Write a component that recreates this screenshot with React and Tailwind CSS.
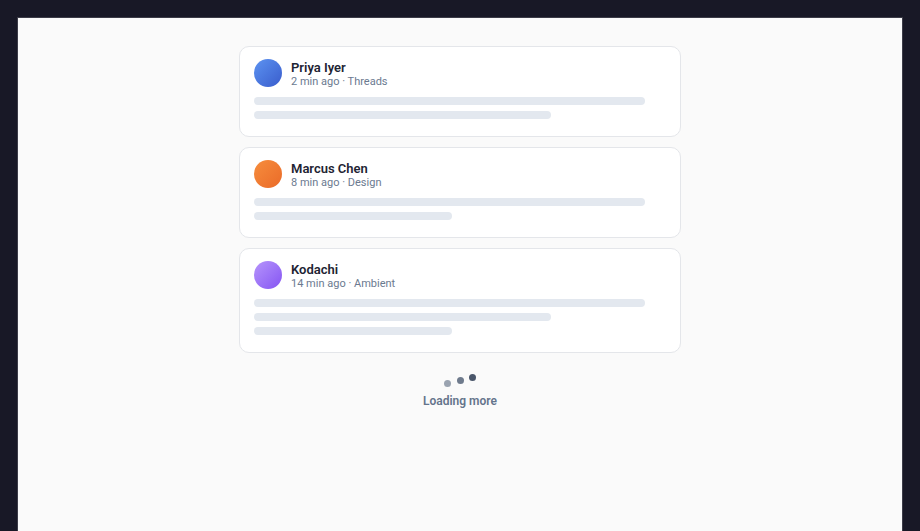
import React from 'react';

const POSTS = [
  { name: 'Priya Iyer', meta: '2 min ago · Threads', avatar: 'bg-gradient-to-br from-[#5d93f1] to-[#3a5ccc]', bars: ['w-[95%]', 'w-[72%]'] },
  { name: 'Marcus Chen', meta: '8 min ago · Design', avatar: 'bg-gradient-to-br from-[#f68d3d] to-[#ea6a28]', bars: ['w-[95%]', 'w-[48%]'] },
  { name: 'Kodachi', meta: '14 min ago · Ambient', avatar: 'bg-gradient-to-br from-[#b794fb] to-[#8652f2]', bars: ['w-[95%]', 'w-[72%]', 'w-[48%]'] },
];

const PostSkeleton = ({ post }) => (
  <div className="bg-white border border-[#e4e6ea] rounded-[10px] pt-[12px] pb-[17px] pl-[14px] pr-[14px]">
    {/* Header */}
    <div className="flex items-center gap-[9px] h-[28px]">
      <div className={`w-[28px] h-[28px] rounded-full shrink-0 ${post.avatar}`} />
      <div className="flex flex-col translate-y-[1px]">
        <div className="text-[13px] leading-[15px] font-semibold text-[#1e2433]">{post.name}</div>
        <div className="text-[11px] leading-[13px] text-[#6b7a90]">{post.meta}</div>
      </div>
    </div>

    {/* Placeholder lines */}
    <div className="mt-[10px] flex flex-col gap-[6px]">
      {post.bars.map((w, i) => (
        <div key={i} className={`h-[8px] rounded-[4px] bg-[#e3e8ef] ${w}`} />
      ))}
    </div>
  </div>
);

const App = () => {
  return (
    <div className="h-screen overflow-hidden bg-[#181826] pt-[18px] px-[18px]" style={{ fontFamily: 'Roboto, "Noto Sans", sans-serif' }}>
      <div className="h-[calc(100vh)] bg-[#fafafa] ring-1 ring-[#3c3c48] pt-[28px] flex flex-col items-center">
        <div className="w-[442px] flex flex-col gap-[10px]">
          {POSTS.map((p) => (
            <PostSkeleton key={p.name} post={p} />
          ))}
        </div>

        {/* Loading indicator */}
        <div className="mt-[21px] flex items-end gap-[5.5px] h-[13px]">
          <span className="w-[7px] h-[7px] rounded-full bg-[#9aa3b0]" />
          <span className="w-[7px] h-[7px] rounded-full bg-[#6e7a8c] -translate-y-[3px]" />
          <span className="w-[7px] h-[7px] rounded-full bg-[#4a566a] -translate-y-[6px]" />
        </div>
        <div className="mt-[7px] text-[12px] leading-[14px] font-semibold text-[#64748b]">Loading more</div>
      </div>
    </div>
  );
};

export default App;
